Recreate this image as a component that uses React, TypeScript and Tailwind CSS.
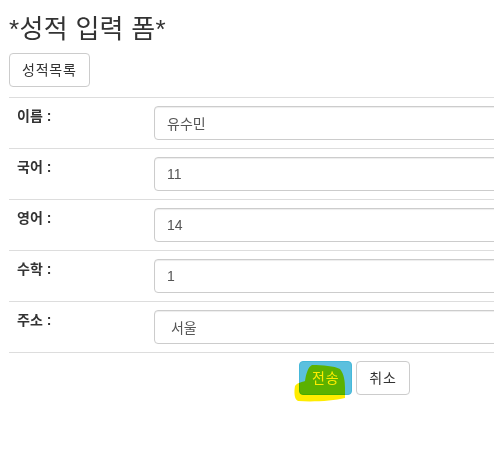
import React from "react"

const rows = [
  { label: "이름 :", value: "유수민" },
  { label: "국어 :", value: "11" },
  { label: "영어 :", value: "14" },
  { label: "수학 :", value: "1" },
  { label: "주소 :", value: " 서울" },
]

const font = "font-['Liberation_Sans','Noto_Sans_CJK_KR',sans-serif]"

export default function App() {
  return (
    <div className={`w-[494px] h-[450px] overflow-hidden bg-white text-[14px] leading-[20px] text-[#333] ${font}`}>
      <div className="w-[700px] pl-[9px] pt-[16px]">
        <h3 className="text-[26px] leading-[27px] font-normal mb-[10px] tracking-[0.3px]">*성적 입력 폼*</h3>

        <button className="h-[34px] px-3 border border-[#ccc] rounded-[4px] bg-white text-[#333] text-[14px] tracking-[0.75px]">
          성적목록
        </button>

        {/* form rows */}
        <div className="mt-[10px]">
          {rows.map((r) => (
            <div key={r.label} className="flex border-t border-[#ddd] p-2">
              <div className="w-[137px] font-bold">{r.label}</div>
              <input
                readOnly
                value={r.value}
                className="flex-1 h-[34px] px-3 border border-[#ccc] rounded-[4px] text-[#555] text-[14px] shadow-[inset_0_1px_1px_rgba(0,0,0,0.075)] whitespace-pre outline-none"
              />
            </div>
          ))}

          <div className="flex gap-1 border-t border-[#ddd] p-2 pl-[290px]">
            <div className="relative">
              <button className="h-[34px] px-3 border border-[#46b8da] rounded-[4px] bg-[#5bc0de] text-white text-[14px] tracking-[0.75px]">
                전송
              </button>
              <svg
                className="absolute left-[-6px] top-0 mix-blend-multiply pointer-events-none"
                width="60"
                height="44"
                viewBox="0 0 60 44"
              >
                <path
                  d="M19 4 C30 4 41 5 47 8 C51 13 52 20 52 27 L52 37 C40 40 20 41 5 40 C1 38 1 31 2 25 C4 22 9 21 12 20 C13 13 15 6 19 4 Z"
                  fill="#ffec00"
                />
              </svg>
            </div>
            <button className="h-[34px] px-3 border border-[#ccc] rounded-[4px] bg-white text-[#333] text-[14px] tracking-[0.75px]">
              취소
            </button>
          </div>
        </div>
      </div>
    </div>
  )
}
